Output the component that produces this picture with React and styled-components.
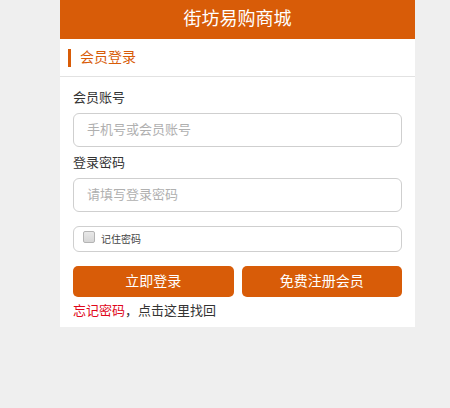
import React from "react";
import styled, { createGlobalStyle } from "styled-components";

const Global = createGlobalStyle`
  html, body { margin: 0; padding: 0; background: #efefef; }
  body { font-family: "Noto Sans CJK SC", "Noto Sans", sans-serif; width: 450px; height: 408px; overflow: hidden; }
  * { box-sizing: border-box; }
`;

const Page = styled.div`
  width: 355px;
  margin-left: 60px;
  background: #fff;
`;

const Header = styled.header`
  height: 39px;
  padding-bottom: 5px;
  background: #d85c08;
  color: #fff;
  display: flex;
  align-items: center;
  justify-content: center;
  font-size: 18px;
  font-weight: 400;
  line-height: 1;
`;

const SectionTitle = styled.div`
  height: 38px;
  display: flex;
  align-items: center;
  padding-left: 8px;
  gap: 9px;
  border-bottom: 1px solid #e2e2e2;
  color: #d85c08;
  font-size: 14px;
`;

const Bar = styled.span`
  width: 3px;
  height: 18px;
  background: #d85c08;
`;

const TitleText = styled.span`
  padding-bottom: 4px;
`;

const Form = styled.div`
  padding: 11px 13px 6px 13px;
  display: flex;
  flex-direction: column;
`;

const Field = styled.div`
  display: flex;
  flex-direction: column;
  gap: 5px;
  margin-bottom: ${(p) => p.$mb || 0}px;
`;

const Label = styled.label`
  height: 20px;
  line-height: 17px;
  font-size: 13px;
  color: #333;
`;

const Input = styled.input`
  height: 34px;
  border: 1px solid #cfcfcf;
  border-radius: 6px;
  padding: 0 13px 4px;
  font-family: inherit;
  font-size: 13px;
  color: #333;
  outline: none;
  &::placeholder { color: #b0b0b0; }
`;

const RememberBox = styled.div`
  margin-top: 14px;
  height: 26px;
  border: 1px solid #cfcfcf;
  border-radius: 6px;
  display: flex;
  align-items: center;
  padding-left: 9px;
  padding-bottom: 2px;
  gap: 6px;
  font-size: 10px;
  color: #444;
`;

const Check = styled.span`
  width: 12px;
  height: 12px;
  border: 1px solid #b4b4b4;
  border-radius: 2px;
  background: linear-gradient(#e8e8e8, #d6d6d6);
  margin-top: -2px;
`;

const Buttons = styled.div`
  margin-top: 14px;
  display: grid;
  grid-template-columns: 1fr 1fr;
  gap: 8px;
`;

const Button = styled.button`
  height: 31px;
  border: none;
  border-radius: 5px;
  padding: 0 0 4px;
  background: #d85c08;
  color: #fff;
  font-family: inherit;
  font-size: 14px;
  font-weight: 400;
  cursor: pointer;
`;

const Forgot = styled.div`
  margin-top: 4px;
  height: 20px;
  line-height: 18px;
  font-size: 13px;
  color: #333;
`;

const Red = styled.span`
  color: #e0071b;
`;

export default function App() {
  return (
    <>
      <Global />
      <Page>
        <Header>街坊易购商城</Header>
        <SectionTitle>
          <Bar />
          <TitleText>会员登录</TitleText>
        </SectionTitle>
        <Form>
          <Field $mb={6}>
            <Label>会员账号</Label>
            <Input placeholder="手机号或会员账号" />
          </Field>
          <Field>
            <Label>登录密码</Label>
            <Input type="password" placeholder="请填写登录密码" />
          </Field>
          <RememberBox>
            <Check />
            记住密码
          </RememberBox>
          <Buttons>
            <Button>立即登录</Button>
            <Button>免费注册会员</Button>
          </Buttons>
          <Forgot>
            <Red>忘记密码</Red>，点击这里找回
          </Forgot>
        </Form>
      </Page>
    </>
  );
}
